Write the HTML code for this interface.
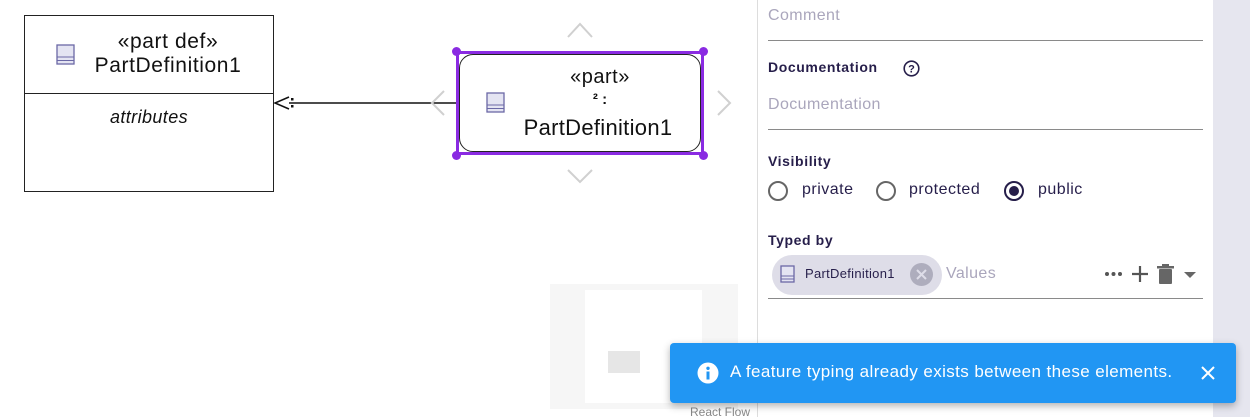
<!DOCTYPE html>
<html><head><style>
body{margin:0;width:1250px;height:417px;overflow:hidden;background:#fff;font-family:"Liberation Sans",Arial,sans-serif;position:relative}
.a{position:absolute}
.lbl{font-weight:bold;font-size:14px;color:#261e4a;letter-spacing:.6px}
.ph{font-size:16px;color:#aaa6bc;letter-spacing:.4px}
.line{height:1px;background:#8a8a8a}
.rad{width:20px;height:20px;border:2px solid #666;border-radius:50%;box-sizing:border-box}
.rt{font-size:16px;color:#261e4a;letter-spacing:.5px}
</style></head><body>
<div class="a" style="left:24px;top:15px;width:248px;height:175px;border:1px solid #222"></div>
<div class="a" style="left:24px;top:93px;width:250px;height:1px;background:#222"></div>
<svg class="a" style="left:56px;top:44px" width="20" height="22"><rect x="1" y="1" width="17" height="19" fill="#e4e4f2" stroke="#6b68a6" stroke-width="1.3"/><line x1="1" y1="13" x2="18" y2="13" stroke="#6b68a6"/><line x1="1" y1="16.5" x2="18" y2="16.5" stroke="#6b68a6"/></svg>
<div class="a" style="left:80px;top:30px;width:176px;text-align:center;font-size:21px;line-height:24px;color:#111;letter-spacing:.6px">«part def»<br>PartDefinition1</div>
<div class="a" style="left:24px;top:107px;width:250px;text-align:center;font-size:18px;font-style:italic;color:#111;letter-spacing:.4px">attributes</div>
<svg class="a" style="left:270px;top:90px" width="190" height="25"><polyline points="19,7 5,13 19,19" fill="none" stroke="#111" stroke-width="1.5"/><rect x="21" y="8" width="2.5" height="2.5" fill="#111"/><rect x="21" y="15" width="2.5" height="2.5" fill="#111"/><line x1="19" y1="13" x2="188" y2="13" stroke="#111" stroke-width="1.5"/></svg>
<svg class="a" style="left:420px;top:0" width="330" height="200" fill="none" stroke="#d0d0d0" stroke-width="2"><polyline points="148,37 160,24 172,37"/><polyline points="148,170 160,182 172,170"/><polyline points="24,91 12,103 24,115"/><polyline points="298,91 310,103 298,115"/></svg>
<div class="a" style="left:456px;top:51px;width:248px;height:104px;border:3px solid #8a2be2;box-sizing:border-box"></div>
<div class="a" style="left:459px;top:54px;width:242px;height:98px;border:1px solid #222;border-radius:14px;box-sizing:border-box;background:#fff"></div>
<div class="a" style="left:452px;top:47px;width:9px;height:9px;border-radius:50%;background:#8a2be2"></div>
<div class="a" style="left:699px;top:47px;width:9px;height:9px;border-radius:50%;background:#8a2be2"></div>
<div class="a" style="left:452px;top:151px;width:9px;height:9px;border-radius:50%;background:#8a2be2"></div>
<div class="a" style="left:699px;top:151px;width:9px;height:9px;border-radius:50%;background:#8a2be2"></div>
<svg class="a" style="left:486px;top:92px" width="20" height="22"><rect x="1" y="1" width="17" height="19" fill="#e4e4f2" stroke="#6b68a6" stroke-width="1.3"/><line x1="1" y1="13" x2="18" y2="13" stroke="#6b68a6"/><line x1="1" y1="16.5" x2="18" y2="16.5" stroke="#6b68a6"/></svg>
<div class="a" style="left:520px;top:66px;width:160px;text-align:center;font-size:20px;color:#111;letter-spacing:.5px">«part»</div>
<div class="a" style="left:520px;top:91px;width:160px;text-align:center;font-size:15px;font-weight:bold;color:#111">²&nbsp;:</div>
<div class="a" style="left:510px;top:115px;width:176px;text-align:center;font-size:22px;color:#111;letter-spacing:.3px">PartDefinition1</div>
<div class="a" style="left:550px;top:284px;width:188px;height:125px;background:#f6f6f6"></div>
<div class="a" style="left:585px;top:290px;width:117px;height:113px;background:#fff"></div>
<div class="a" style="left:608px;top:351px;width:32px;height:22px;background:#e6e6e6"></div>
<div class="a" style="left:690px;top:405px;font-size:12px;color:#888">React Flow</div>
<div class="a" style="left:757px;top:0;width:1px;height:417px;background:#ddd"></div>
<div class="a" style="left:1213px;top:0;width:37px;height:417px;background:#e6e6ef"></div>
<div class="a ph" style="left:768px;top:7px">Comment</div>
<div class="a line" style="left:768px;top:40px;width:435px"></div>
<div class="a lbl" style="left:768px;top:59px">Documentation</div>
<svg class="a" style="left:903px;top:60px" width="17" height="17"><circle cx="8.5" cy="8.5" r="7.3" fill="none" stroke="#261e4a" stroke-width="1.6"/><text x="8.5" y="12.5" text-anchor="middle" font-size="11" font-weight="bold" fill="#261e4a" font-family="Liberation Sans">?</text></svg>
<div class="a ph" style="left:768px;top:96px">Documentation</div>
<div class="a line" style="left:768px;top:129px;width:435px"></div>
<div class="a lbl" style="left:768px;top:153px">Visibility</div>
<div class="a rad" style="left:768px;top:181px"></div><div class="a rt" style="left:802px;top:181px">private</div>
<div class="a rad" style="left:876px;top:181px"></div><div class="a rt" style="left:909px;top:181px">protected</div>
<div class="a rad" style="left:1004px;top:181px;border-color:#261e4a"><div style="margin:3px;width:10px;height:10px;border-radius:50%;background:#261e4a"></div></div><div class="a rt" style="left:1038px;top:181px">public</div>
<div class="a lbl" style="left:768px;top:232px">Typed by</div>
<div class="a" style="left:772px;top:255px;width:170px;height:40px;border-radius:20px;background:#dedde8"></div>
<svg class="a" style="left:780px;top:265px" width="16" height="19"><rect x="1" y="1" width="13" height="16" fill="#e4e4f2" stroke="#6b68a6" stroke-width="1.3"/><line x1="1" y1="11" x2="14" y2="11" stroke="#6b68a6"/><line x1="1" y1="14" x2="14" y2="14" stroke="#6b68a6"/></svg>
<div class="a" style="left:805px;top:266px;font-size:13px;color:#261e4a;letter-spacing:.3px">PartDefinition1</div>
<svg class="a" style="left:910px;top:263px" width="23" height="23"><circle cx="11.5" cy="11.5" r="11.5" fill="#aeadbd"/><path d="M7 7L16 16M16 7L7 16" stroke="#dedde8" stroke-width="2"/></svg>
<div class="a ph" style="left:946px;top:265px">Values</div>
<svg class="a" style="left:1104px;top:263px" width="96" height="22"><circle cx="3" cy="11" r="2" fill="#555"/><circle cx="9.5" cy="11" r="2" fill="#555"/><circle cx="16" cy="11" r="2" fill="#555"/><path d="M36 3V19M28 11H44" stroke="#555" stroke-width="2.2"/><rect x="55" y="6" width="13" height="15" rx="1" fill="#666"/><rect x="53" y="3" width="17" height="2.5" fill="#666"/><rect x="58" y="1" width="7" height="2.5" fill="#666"/><path d="M80 9H92L86 15Z" fill="#666"/></svg>
<div class="a line" style="left:768px;top:298px;width:435px"></div>
<div class="a" style="left:670px;top:343px;width:566px;height:60px;background:#2196f3;border-radius:4px;box-shadow:0 3px 8px rgba(0,0,0,.3)"></div>
<svg class="a" style="left:697px;top:362px" width="22" height="22"><circle cx="11" cy="11" r="10.5" fill="#fff"/><rect x="9.5" y="9.5" width="3" height="8" fill="#2196f3"/><circle cx="11" cy="6.3" r="1.7" fill="#2196f3"/></svg>
<div class="a" style="left:730px;top:362px;font-size:17px;color:#fff;letter-spacing:.4px">A feature typing already exists between these elements.</div>
<svg class="a" style="left:1201px;top:366px" width="14" height="14"><path d="M1 1L13 13M13 1L1 13" stroke="#fff" stroke-width="2"/></svg>
</body></html>
